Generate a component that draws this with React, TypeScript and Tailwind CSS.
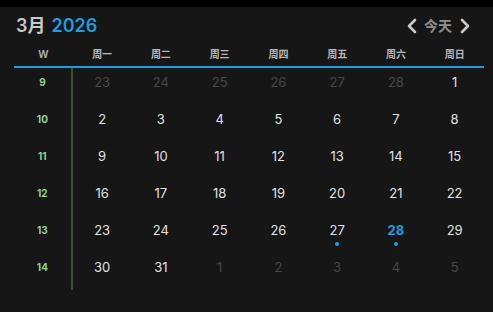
const WEEKDAYS = ["周一", "周二", "周三", "周四", "周五", "周六", "周日"];

type Day = { n: number; dim?: boolean; today?: boolean; dot?: boolean };

const ROWS: { week: number; days: Day[] }[] = [
  { week: 9, days: [23, 24, 25, 26, 27, 28].map((n) => ({ n, dim: true })).concat([{ n: 1 }]) },
  { week: 10, days: [2, 3, 4, 5, 6, 7, 8].map((n) => ({ n })) },
  { week: 11, days: [9, 10, 11, 12, 13, 14, 15].map((n) => ({ n })) },
  { week: 12, days: [16, 17, 18, 19, 20, 21, 22].map((n) => ({ n })) },
  {
    week: 13,
    days: [
      { n: 23 },
      { n: 24 },
      { n: 25 },
      { n: 26 },
      { n: 27, dot: true },
      { n: 28, today: true, dot: true },
      { n: 29 },
    ],
  },
  { week: 14, days: [{ n: 30 }, { n: 31 }, ...[1, 2, 3, 4, 5].map((n) => ({ n, dim: true }))] },
];

function Chevron({ dir }: { dir: "left" | "right" }) {
  return (
    <svg width="10" height="16" viewBox="0 0 10 16" fill="none" stroke="currentColor" strokeWidth="2.6" strokeLinecap="round" strokeLinejoin="round">
      {dir === "left" ? <polyline points="8,2 2,8 8,14" /> : <polyline points="2,2 8,8 2,14" />}
    </svg>
  );
}

export default function App() {
  return (
    <div
      className="w-[493px] h-[312px] bg-[#161616] border-t-[7px] border-black overflow-hidden"
      style={{ fontFamily: "Inter, 'Noto Sans CJK SC', sans-serif" }}
    >
      <div className="flex items-center justify-between pl-[16px] pr-[23px] h-[29px] mt-[4px]">
        <div className="flex items-baseline gap-[6px] text-[18px] font-semibold leading-none">
          <span className="text-[#c9c9c9]">3月</span>
          <span className="text-[#1e9ce0]">2026</span>
        </div>
        <div className="flex items-center text-[#c8c8c8]">
          <Chevron dir="left" />
          <span className="text-[14px] font-semibold text-[#8f8f8f] ml-[7px] mr-[8px]">今天</span>
          <Chevron dir="right" />
        </div>
      </div>

      <div className="ml-[14px] mr-[9px] mt-[3px]">
        <div className="grid grid-cols-8 h-[25px] items-center text-[10px] font-semibold text-[#b8b8b8] border-b-2 border-[#1e9ce0]">
          <div className="text-center">W</div>
          {WEEKDAYS.map((d) => (
            <div key={d} className="text-center">
              {d}
            </div>
          ))}
        </div>

        <div className="grid grid-cols-8">
          <div className="border-r-2 border-[#3d4a36] flex flex-col">
            {ROWS.map((r) => (
              <div
                key={r.week}
                className="h-[37px] pt-[6px] leading-[16px] text-center text-[10px] font-bold text-[#8fd48f]"
              >
                {r.week}
              </div>
            ))}
          </div>
          {Array.from({ length: 7 }).map((_, c) => (
            <div key={c} className="flex flex-col">
              {ROWS.map((r) => {
                const d = r.days[c];
                return (
                  <div key={r.week} className="h-[37px] pt-[6px] flex flex-col items-center">
                    <span
                      className={
                        "text-[13px] leading-[16px] " +
                        (d.today
                          ? "text-[#1e9ce0] font-bold"
                          : d.dim
                            ? "text-[#474747]"
                            : "text-[#e2e2e2]")
                      }
                    >
                      {d.n}
                    </span>
                    {d.dot && (
                      <span className="mt-[4px] w-[4px] h-[4px] rounded-full bg-[#1e9ce0]" />
                    )}
                  </div>
                );
              })}
            </div>
          ))}
        </div>
      </div>
    </div>
  );
}
